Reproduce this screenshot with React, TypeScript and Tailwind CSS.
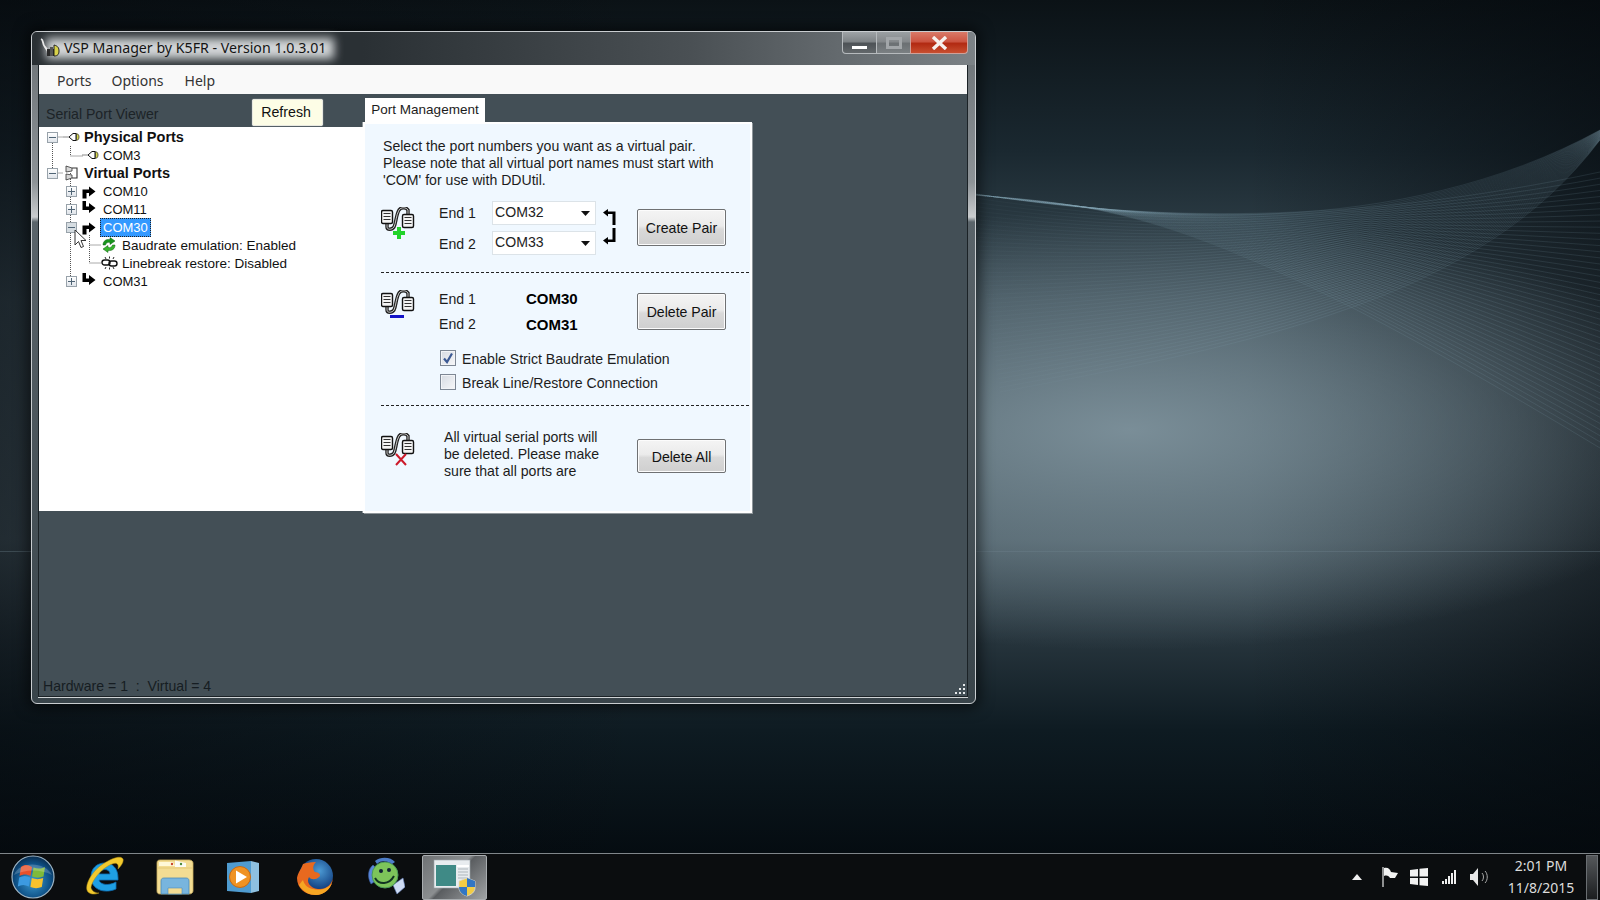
import React from 'react';

type P = [number, number];

const mix = (a: P[], b: P[], t: number) => {
  const p = a.map((q, i) => [q[0] + (b[i][0] - q[0]) * t, q[1] + (b[i][1] - q[1]) * t]);
  return `M${p[0][0]} ${p[0][1]}C${p[1][0]} ${p[1][1]} ${p[2][0]} ${p[2][1]} ${p[3][0]} ${p[3][1]}`;
};

const meshA: [P[], P[]] = [
  [[970, 193], [1150, 222], [1400, 240], [1600, 130]],
  [[1000, 392], [1250, 345], [1480, 300], [1600, 140]],
];
const meshB: [P[], P[]] = [
  [[970, 193], [1150, 222], [1350, 225], [1600, 172]],
  [[970, 195], [1130, 205], [1230, 225], [1600, 448]],
];
const steps = Array.from({ length: 46 }, (_, i) => i / 45);

const Wallpaper = () => (
  <svg className="absolute inset-0" width="1600" height="853" viewBox="0 0 1600 853">
    <defs>
      <linearGradient id="meshFade" gradientUnits="userSpaceOnUse" x1="975" y1="0" x2="1280" y2="0">
        <stop offset="0" stopColor="#86a8b8" stopOpacity="0.05" />
        <stop offset="1" stopColor="#86a8b8" stopOpacity="0.24" />
      </linearGradient>
    </defs>
    <g fill="none" stroke="url(#meshFade)" strokeWidth="0.6">
      {steps.map((t) => (
        <path key={`a${t}`} d={mix(meshA[0], meshA[1], t)} />
      ))}
      {steps.map((t) => (
        <path key={`b${t}`} d={mix(meshB[0], meshB[1], t)} />
      ))}
    </g>
    <line x1="0" y1="551.5" x2="1600" y2="551.5" stroke="#71858f" strokeOpacity="0.35" />
  </svg>
);

const TitleIcon = () => (
  <svg width="22" height="22" viewBox="0 0 22 22" className="shrink-0">
    <path d="M2 2C5 3 3 7 6 10C8 12 9 14 9 17" fill="none" stroke="#e8e8e8" strokeWidth="1.8" />
    <path d="M8 12H15V19H8Z" fill="#2a2a2a" />
    <path d="M15 8C19 9 20 11 20 14C20 17 19 19 15 19Z" fill="#d8d24a" stroke="#222" />
    <path d="M11 10H14V19H11Z" fill="#555" />
  </svg>
);

const PlugIcon = ({ dash }: { dash?: boolean }) => (
  <svg width="17" height="12" viewBox="0 0 17 12" className="shrink-0 overflow-visible">
    {dash && <path d="M0 6H6" stroke="#8a8a8a" strokeWidth="1" />}
    <path d="M6 6L10 2.5H13V9.5H10Z" fill="#fff" stroke="#111" strokeWidth="1" />
    <path d="M13.5 2.5C15.5 3 16 4.5 16 6C16 7.5 15.5 9 13.5 9.5Z" fill="#d6d64a" stroke="#222" strokeWidth="0.7" />
  </svg>
);

const VirtualIcon = () => (
  <svg width="17" height="16" viewBox="0 0 17 16" className="shrink-0 overflow-visible">
    <path d="M3 1L9 3V6L3 7Z" fill="#d8d8d8" stroke="#333" strokeWidth="0.8" />
    <path d="M3 9L9 10V13L3 15Z" fill="#d8d8d8" stroke="#333" strokeWidth="0.8" />
    <path d="M9 3H14V13H9" fill="none" stroke="#333" strokeWidth="1.1" />
  </svg>
);

const ArrowOut = () => (
  <svg width="14" height="18" viewBox="0 0 14 18" className="shrink-0">
    <path d="M0.5 16.5V7.5H7V4.5L13.5 9.5L7 14.5V11H4.5V16.5Z" fill="#000" />
  </svg>
);

const ArrowIn = () => (
  <svg width="14" height="18" viewBox="0 0 14 18" className="shrink-0">
    <path d="M0.5 1H4V6.5H7V3L13.5 8L7 13V10H0.5Z" fill="#000" />
  </svg>
);

const RefreshGreen = () => (
  <svg width="16" height="16" viewBox="0 0 16 16" className="shrink-0">
    <path d="M2 8C2 4 5 2 9 2.5L9 0.5L14 4L9 7.5L9 5.5C6.5 5 5 6 4.5 8Z" fill="#17951c" stroke="#0b5c10" strokeWidth="0.5" />
    <path d="M14 8C14 12 11 14 7 13.5L7 15.5L2 12L7 8.5L7 10.5C9.5 11 11 10 11.5 8Z" fill="#37b52c" stroke="#0b5c10" strokeWidth="0.5" />
  </svg>
);

const BrokenLink = () => (
  <svg width="17" height="14" viewBox="0 0 17 14" className="shrink-0 overflow-visible">
    <g fill="none" stroke="#111" strokeWidth="1.4">
      <rect x="1" y="4" width="8" height="5" rx="2.5" />
      <rect x="8" y="5" width="8" height="5" rx="2.5" />
      <path d="M4 1L5 3M8.5 0.5V2.5M13 1L12 3M4 13L5 11M8.5 13.5V11.5M13 13L12 11" strokeWidth="0.9" />
    </g>
  </svg>
);

const Expander = ({ open, faded }: { open: boolean; faded?: boolean }) => (
  <span
    className={`relative block w-[11px] h-[11px] border border-[#98a2aa] ${faded ? 'bg-[#d6dde2]' : 'bg-[linear-gradient(180deg,#ffffff,#dfe4ea)]'}`}
  >
    <span className="absolute left-[1px] right-[1px] top-[4px] h-px bg-[#4f6475]" />
    {!open && <span className="absolute top-[1px] bottom-[1px] left-[4px] w-px bg-[#4f6475]" />}
  </span>
);

const indent = ['pl-[8px]', 'pl-[27px]', 'pl-[46px]'];
const labelSize = ['text-[14.5px]', 'text-[13px]', 'text-[13.5px]'];

const TreeRow = ({
  level,
  expander,
  icon,
  label,
  bold,
  selected,
  faded,
}: {
  level: number;
  expander?: 'open' | 'closed';
  icon: React.ReactNode;
  label: string;
  bold?: boolean;
  selected?: boolean;
  faded?: boolean;
}) => (
  <div className={`flex items-center h-[18px] ${indent[level]}`}>
    <span className="w-[16px] shrink-0">
      {expander && <Expander open={expander === 'open'} faded={faded} />}
    </span>
    <span className="w-[15px] flex items-center shrink-0">{icon}</span>
    <span
      className={`ml-[3px] px-[2px] leading-[17px] border border-dotted ${labelSize[level]} ${
        selected ? 'bg-[#3399ff] text-white border-[#222]' : 'border-transparent text-[#111]'
      } ${bold ? 'font-bold text-[#000]' : ''}`}
    >
      {label}
    </span>
  </div>
);

const PairIcon = ({ children }: { children: React.ReactNode }) => (
  <svg width="34" height="34" viewBox="0 0 34 34" className="shrink-0">
    <path d="M6 16V20C6 23 11 23 13 20C15 16 15 8 18 3C20 0 25 0 27 3V7" fill="none" stroke="#222" strokeWidth="3.4" />
    <path d="M6 16V20C6 23 11 23 13 20C15 16 15 8 18 3C20 0 25 0 27 3V7" fill="none" stroke="#c4c4c4" strokeWidth="1" />
    <rect x="0.5" y="3.5" width="11" height="13" rx="1.5" fill="#f4f4f4" stroke="#111" strokeWidth="1.4" />
    <path d="M2.5 6.5H9.5M2.5 9.5H9.5M2.5 12.5H9.5" stroke="#333" strokeWidth="1" />
    <rect x="21.5" y="7.5" width="11" height="13" rx="1.5" fill="#f4f4f4" stroke="#111" strokeWidth="1.4" />
    <path d="M23.5 10.5H30.5M23.5 13.5H30.5M23.5 16.5H30.5" stroke="#333" strokeWidth="1" />
    {children}
  </svg>
);

const Caret = () => (
  <svg width="9" height="5" viewBox="0 0 9 5" className="ml-auto mr-[5px] shrink-0">
    <path d="M0 0H9L4.5 5Z" fill="#111" />
  </svg>
);

const Combo = ({ value }: { value: string }) => (
  <div className="flex items-center w-[104px] h-[24px] pl-[2px] bg-white border border-[#dce3e8] text-[#222]">
    <span className="-mt-[1px]">{value}</span>
    <Caret />
  </div>
);

const WinButton = ({ children, className }: { children: string; className: string }) => (
  <button
    className={`w-[89px] shrink-0 pt-[2px] rounded-[2px] border border-[#6f7173] bg-[linear-gradient(180deg,#f4f4f4_0%,#ebebeb_45%,#d9d9d9_55%,#cfcfcf_100%)] shadow-[inset_0_0_0_1px_#fcfcfc] text-[#111] text-center ${className}`}
  >
    {children}
  </button>
);

const Check = ({ checked, label }: { checked?: boolean; label: string }) => (
  <div className="flex items-center h-[16px]">
    <span className="flex items-center justify-center w-[16px] h-[16px] border border-[#7d8794] bg-[linear-gradient(135deg,#d6dbe2,#f6f7f9)] shadow-[inset_0_0_0_1px_#f2f4f7] shrink-0">
      {checked && (
        <svg width="12" height="12" viewBox="0 0 12 12">
          <path d="M2 6.5L5 10L10 1.5" fill="none" stroke="#3c5a94" strokeWidth="2.2" />
        </svg>
      )}
    </span>
    <span className="ml-[6px] pt-[2px] text-[#1d1d1d]">{label}</span>
  </div>
);

const Cursor = () => (
  <svg width="14" height="20" viewBox="0 0 14 20" className="absolute left-[35px] top-[102px]">
    <path d="M1 1V16L4.5 12.5L7 18.5L9.5 17.5L7 11.5H12Z" fill="#fff" stroke="#333" strokeWidth="1" />
  </svg>
);

const TreeLines = () => (
  <svg className="absolute inset-0" width="324" height="384">
    <path
      d="M13.5 16V46M13.5 46H24M13.5 10H24M31.5 19V29H44M31.5 46V154M31.5 64H28M31.5 82H28M31.5 154H28M50.5 108V136H62M50.5 118H62"
      fill="none"
      stroke="#555"
      strokeWidth="1"
      strokeDasharray="1 1"
    />
  </svg>
);

const StartOrb = () => (
  <svg width="44" height="44" viewBox="0 0 44 44">
    <defs>
      <radialGradient id="orb" cx="50%" cy="60%" r="60%">
        <stop offset="0" stopColor="#3d9bd0" />
        <stop offset="0.7" stopColor="#0d4f85" />
        <stop offset="1" stopColor="#0a2c4d" />
      </radialGradient>
    </defs>
    <circle cx="22" cy="22" r="21" fill="url(#orb)" stroke="#9fb6c6" strokeWidth="1.2" />
    <path d="M10 12C14 9 17 10 21 12L19.5 21C15.5 19 12.5 19 8.5 21Z" fill="#e8502a" />
    <path d="M22.5 12.5C26.5 14 30 14 34 12L32.5 21.5C28.5 23 25 23 21 21.5Z" fill="#7fba3a" />
    <path d="M8.2 22.5C12 20.5 15.5 20.5 19.2 22.5L17.8 31.5C14 29.5 10.5 29.5 6.8 31.5Z" fill="#3c9ae0" />
    <path d="M20.8 23C24.5 24.5 28.5 24.5 32.2 23L30.8 32C27 33.5 23 33.5 19.4 32Z" fill="#f7c22e" />
    <path d="M3 20C8 6 34 6 41 20C30 14 14 14 3 20Z" fill="#fff" opacity="0.2" />
  </svg>
);

const IeIcon = () => (
  <svg width="40" height="42" viewBox="0 0 40 42">
    <path
      d="M6 21C6 12 12 7 20 7C28 7 33 13 33 22V24H14C15 29 24 30 31 26V33C20 38 6 34 6 21ZM14 18H25C25 12 15 12 14 18Z"
      fill="#1f9fe4"
      stroke="#0d6fb5"
      strokeWidth="0.8"
    />
    <path d="M3 36C-2 30 8 14 18 8C27 2 36 -1 38 3C39 6 36 10 33 13C34 8 32 6 27 8C16 12 6 26 6 32C7 35 10 37 14 37C9 39 5 38 3 36Z" fill="#f2c92e" stroke="#b38f12" strokeWidth="0.5" />
  </svg>
);

const FolderIcon = () => (
  <svg width="40" height="40" viewBox="0 0 40 40">
    <path d="M2 6C2 4 3 3 5 3H34C36 3 38 4 38 6V34C38 36 36 37 34 37H5C3 37 2 36 2 34Z" fill="#f3dc93" stroke="#c9ad5e" strokeWidth="0.8" />
    <path d="M4 5H18L20 9H4Z" fill="#fff8d8" />
    <path d="M20 3.5L31 6V10H20Z" fill="#fbfbf3" />
    <circle cx="17" cy="7" r="1.2" fill="#c8452c" />
    <circle cx="26" cy="7" r="1.2" fill="#4b8a3c" />
    <path d="M2 11H38" stroke="#e3c877" />
    <path d="M6 37V24C6 22 7 21 9 21H31C33 21 34 22 34 24V37Z" fill="#78b5de" stroke="#4d8ab8" strokeWidth="0.8" />
    <path d="M13 37V31H27V37Z" fill="#f3dc93" stroke="#4d8ab8" strokeWidth="0.6" />
  </svg>
);

const PlayerIcon = () => (
  <svg width="34" height="34" viewBox="0 0 34 34">
    <path d="M1 3L25 1V33L1 31Z" fill="#4f9bd0" />
    <path d="M25 1L33 3V31L25 33Z" fill="#8ec0e0" />
    <circle cx="14" cy="17" r="10.5" fill="#ef9223" stroke="#c96a12" />
    <path d="M10 10.5L21 17L10 23.5Z" fill="#fff" />
  </svg>
);

const FoxIcon = () => (
  <svg width="38" height="38" viewBox="0 0 38 38">
    <defs>
      <radialGradient id="globe" cx="60%" cy="35%" r="55%">
        <stop offset="0" stopColor="#4c9ad4" />
        <stop offset="1" stopColor="#123f80" />
      </radialGradient>
    </defs>
    <circle cx="20" cy="18" r="17" fill="url(#globe)" />
    <path d="M7 6C5 12 2 14 1 20C1 30 9 37 19 37C29 37 36 30 37 20C36 26 30 32 22 31C14 30 10 24 13 19C15 22 20 22 23 19C26 17 22 14 19 14C17 12 16 8 20 4C14 4 10 5 7 6Z" fill="#e8691f" />
    <path d="M3 27C7 34 14 37 20 37C28 37 34 31 36 25C32 31 24 33 17 31C11 30 8 26 7 22C5 24 4 26 3 27Z" fill="#f6a623" />
  </svg>
);

const BuddyIcon = () => (
  <svg width="40" height="40" viewBox="0 0 40 40">
    <path d="M8 8C3 12 2 20 6 27L12 23L11 11Z" fill="#5a87d8" stroke="#3b5fa8" strokeWidth="0.6" />
    <path d="M28 28L38 21L40 30L32 37Z" fill="#cfdcf4" stroke="#6a84c0" strokeWidth="0.6" />
    <circle cx="20" cy="18" r="13" fill="#7dc45a" stroke="#4a9a5a" />
    <circle cx="16" cy="14" r="2" fill="#123" />
    <circle cx="24" cy="13" r="2" fill="#123" />
    <path d="M10 21C14 28 24 28 29 19" fill="none" stroke="#132" strokeWidth="2" />
    <path d="M10 4C16 -1 26 0 30 5L27 7C23 4 16 3 12 7Z" fill="#4d7dc8" />
  </svg>
);

const AppTile = () => (
  <svg width="44" height="40" viewBox="0 0 44 40">
    <rect x="1" y="3" width="36" height="28" fill="#e8ecef" stroke="#9ba3a8" strokeWidth="0.6" />
    <rect x="3" y="8" width="20" height="21" fill="#3f8a86" />
    <rect x="24" y="8" width="12" height="2" fill="#fff" />
    <path d="M25 12H35M25 15H35M25 18H35M25 21H35" stroke="#aeb6bb" strokeWidth="1" />
    <path d="M26 24L34 21L42 24V31C42 35 38 38 34 39C30 38 26 35 26 31Z" fill="#f2cc44" stroke="#d5d9dc" strokeWidth="0.8" />
    <path d="M34 21L42 24V30H34ZM34 30V39C30 38 26 35 26 30Z" fill="#3276c3" />
  </svg>
);

const App = () => {
  return (
    <div className="flex flex-col w-[1600px] h-[900px] overflow-hidden bg-black font-['Liberation_Sans',sans-serif] text-[14.1px]">
      <div className="relative flex-1 bg-[radial-gradient(ellipse_600px_220px_at_1130px_430px,rgba(125,145,155,0.95)_0%,rgba(125,145,155,0)_100%),linear-gradient(90deg,rgba(4,8,12,0.55)_0%,rgba(4,8,12,0)_40%,rgba(4,8,12,0)_78%,rgba(4,8,12,0.6)_100%),linear-gradient(180deg,#0b1216_0px,#1a2830_150px,#3a4b54_300px,#465760_540px,#26343c_640px,#0e1b22_730px,#050c11_853px)]">
        <Wallpaper />

        {/* Window */}
        <div className="absolute left-[31px] top-[31px] w-[945px] h-[673px] flex flex-col rounded-[6px] border border-[#c9cdd0] bg-[linear-gradient(180deg,#6a7074_0px,#8d9397_150px,#c9ccce_185px,#5a646a_190px,#39444a_100%)] shadow-[0_0_14px_4px_rgba(0,0,0,0.55)]">
          {/* Title bar */}
          <div className="relative flex items-center h-[33px] -mb-px rounded-t-[5px] pl-[7px] bg-[linear-gradient(90deg,#2a3034_0%,#2a3034_35%,#4a5054_70%,#7c8286_100%)]">
            <div className="absolute left-[14px] top-[6px] w-[288px] h-[21px] bg-[#d2d5d7] blur-[5px]" />
            <div className="relative flex items-center -mt-[1px]">
              <TitleIcon />
              <span className="ml-[3px] text-[#141414] text-[14.2px] font-['Noto_Sans',sans-serif]">
                VSP Manager by K5FR - Version 1.0.3.01
              </span>
            </div>
            <div className="absolute right-[7px] top-0 flex h-[22px]">
              <div className="flex items-end justify-center w-[35px] rounded-bl-[4px] border border-t-0 border-[#b6babd] bg-[linear-gradient(180deg,#9ea3a6_0%,#7f8487_45%,#4d5256_55%,#63686b_100%)] pb-[4px]">
                <span className="block w-[15px] h-[3px] bg-white" />
              </div>
              <div className="flex items-center justify-center w-[33px] border-b border-[#b6babd] bg-[linear-gradient(180deg,#9a9fa2_0%,#85898c_45%,#6b7073_55%,#7b8083_100%)]">
                <span className="block w-[16px] h-[12px] border-[3px] border-[#a2a6a9]" />
              </div>
              <div className="flex items-center justify-center w-[58px] rounded-br-[4px] border border-t-0 border-[#d0a098] bg-[linear-gradient(180deg,#d97a68_0%,#cc5542_45%,#b22a12_55%,#c84f30_100%)]">
                <svg width="17" height="14" viewBox="0 0 17 14">
                  <path d="M2 1L15 13M15 1L2 13" fill="none" stroke="#f6f1ee" strokeWidth="3.4" />
                </svg>
              </div>
            </div>
          </div>

          {/* Client area */}
          <div className="flex flex-col flex-1 ml-[6px] mr-[7px] mb-[6px] border border-[#1b2226] shadow-[0_1px_0_#cfd3d5]">
            <div className="flex items-center h-[29px] pt-[1px] bg-[#f9f9f9] font-['Noto_Sans',sans-serif] text-[14px] text-[#333]">
              <span className="ml-[18px]">Ports</span>
              <span className="ml-[20px]">Options</span>
              <span className="ml-[21px]">Help</span>
            </div>

            <div className="relative flex flex-col flex-1 bg-[#434f56]">
              <div className="flex">
                {/* Serial port viewer */}
                <div className="w-[324px] shrink-0">
                  <div className="flex h-[33px]">
                    <span className="ml-[7px] mt-[12px] text-[#1c2327] leading-[17px]">Serial Port Viewer</span>
                    <button className="ml-[93px] mt-[5px] w-[71px] h-[27px] pr-[2px] rounded-[2px] bg-[#fdfde6] border border-[#e8e8e0] text-[14.2px] text-[#111] text-center shadow-[0_0_1px_#fff]">
                      Refresh
                    </button>
                  </div>
                  <div className="relative h-[384px] pt-[1px] bg-white">
                    <TreeLines />
                    <div className="relative">
                      <TreeRow level={0} expander="open" icon={<PlugIcon dash />} label="Physical Ports" bold />
                      <TreeRow level={1} icon={<PlugIcon dash />} label="COM3" />
                      <TreeRow level={0} expander="open" icon={<VirtualIcon />} label="Virtual Ports" bold />
                      <TreeRow level={1} expander="closed" icon={<ArrowOut />} label="COM10" />
                      <TreeRow level={1} expander="closed" icon={<ArrowIn />} label="COM11" />
                      <TreeRow level={1} expander="open" faded icon={<ArrowOut />} label="COM30" selected />
                      <TreeRow level={2} icon={<RefreshGreen />} label="Baudrate emulation: Enabled" />
                      <TreeRow level={2} icon={<BrokenLink />} label="Linebreak restore: Disabled" />
                      <TreeRow level={1} expander="closed" icon={<ArrowIn />} label="COM31" />
                    </div>
                    <Cursor />
                  </div>
                </div>

                {/* Port management tab */}
                <div className="w-[389px] shrink-0 pt-[4px] text-[#1c1c1c]">
                  <div className="flex items-center justify-center ml-[2px] w-[120px] h-[24px] bg-white text-[13.5px]">
                    Port Management
                  </div>
                  <div className="h-[391px] pl-[16px] border-2 border-white bg-[#f0f8ff] shadow-[1px_1px_0_#8f969a,-1px_0_0_#8f969a]">
                    <p className="pl-[2px] pt-[14px] leading-[17px]">
                      Select the port numbers you want as a virtual pair.
                      <br />
                      Please note that all virtual port names must start with
                      <br />
                      'COM' for use with DDUtil.
                    </p>

                    <div className="flex mt-[12px]">
                      <div className="w-[58px] pt-[6px] shrink-0">
                        <PairIcon>
                          <path d="M18 20V32M12 26H24" stroke="#22d32a" strokeWidth="4" />
                        </PairIcon>
                      </div>
                      <div className="flex flex-col gap-[6px] w-[157px] shrink-0">
                        <div className="flex items-center">
                          <span className="w-[53px] pt-[2px]">End 1</span>
                          <Combo value="COM32" />
                        </div>
                        <div className="flex items-center">
                          <span className="w-[53px] pt-[3px]">End 2</span>
                          <Combo value="COM33" />
                        </div>
                      </div>
                      <div className="flex flex-col gap-[3px] ml-[7px] mt-[8px] w-[14px] shrink-0">
                        <svg width="13" height="16" viewBox="0 0 13 16">
                          <path d="M0 3.5L5 0V2.5H12.5V16H9.5V5H5V7.5Z" fill="#000" />
                        </svg>
                        <svg width="13" height="17" viewBox="0 0 13 17">
                          <path d="M0 12.5L5 9V11.5H9.5V0H12.5V14H5V16.5Z" fill="#000" />
                        </svg>
                      </div>
                      <WinButton className="ml-[20px] mt-[8px] h-[37px]">Create Pair</WinButton>
                    </div>

                    <div className="w-[368px] mt-[17px] border-t border-dashed border-[#222]" />

                    <div className="flex mt-[17px]">
                      <div className="w-[58px] shrink-0">
                        <PairIcon>
                          <rect x="9" y="25" width="14" height="3" fill="#1414c8" />
                        </PairIcon>
                      </div>
                      <div className="flex flex-col gap-[8px] w-[198px] shrink-0 pt-[1px] leading-[17px]">
                        <div className="flex">
                          <span className="w-[87px]">End 1</span>
                          <span className="-mt-[1px] font-bold text-[#000] text-[15px]">COM30</span>
                        </div>
                        <div className="flex">
                          <span className="w-[87px]">End 2</span>
                          <span className="font-bold text-[#000] text-[15px]">COM31</span>
                        </div>
                      </div>
                      <WinButton className="mt-[3px] h-[37px]">Delete Pair</WinButton>
                    </div>

                    <div className="flex flex-col gap-[8px] mt-[17px] ml-[59px]">
                      <Check checked label="Enable Strict Baudrate Emulation" />
                      <Check label="Break Line/Restore Connection" />
                    </div>

                    <div className="w-[368px] mt-[15px] border-t border-dashed border-[#222]" />

                    <div className="flex mt-[23px]">
                      <div className="w-[63px] pt-[4px] shrink-0">
                        <PairIcon>
                          <path d="M15 21L25 32M25 21L15 32" stroke="#cc1a2a" strokeWidth="2" />
                        </PairIcon>
                      </div>
                      <p className="w-[193px] shrink-0 leading-[17px]">
                        All virtual serial ports will
                        <br />
                        be deleted. Please make
                        <br />
                        sure that all ports are
                      </p>
                      <WinButton className="mt-[10px] h-[34px]">Delete All</WinButton>
                    </div>
                  </div>
                </div>
              </div>

              <div className="mt-auto pl-[4px] pb-[1px] leading-[17px] text-[#161d22]">Hardware = 1&nbsp; :&nbsp; Virtual = 4</div>

              <svg width="12" height="12" viewBox="0 0 12 12" className="absolute right-[1px] bottom-0">
                <path d="M9 0H11V2H9ZM5 4H7V6H5ZM9 4H11V6H9ZM1 8H3V10H1ZM5 8H7V10H5ZM9 8H11V10H9Z" fill="#e4e8ea" />
              </svg>
            </div>
          </div>
        </div>
      </div>

      {/* Taskbar */}
      <div className="flex items-center h-[47px] border-t border-[#80868a] bg-[#0b0d0f] font-['Noto_Sans',sans-serif]">
        <div className="flex items-center justify-center w-[70px] pr-[4px]">
          <StartOrb />
        </div>
        <div className="flex items-center justify-center w-[70px]">
          <IeIcon />
        </div>
        <div className="flex items-center justify-center w-[70px]">
          <FolderIcon />
        </div>
        <div className="flex items-center justify-center w-[70px] pr-[5px]">
          <PlayerIcon />
        </div>
        <div className="flex items-center justify-center w-[70px]">
          <FoxIcon />
        </div>
        <div className="flex items-center justify-center w-[70px]">
          <BuddyIcon />
        </div>
        <div className="flex items-center justify-center ml-[2px] w-[65px] h-[45px] rounded-[2px] border border-[#a9adb0] bg-[linear-gradient(135deg,#6f7275_0%,#8b8e90_45%,#5a5d60_50%,#a0a3a5_100%)]">
          <AppTile />
        </div>

        <div className="flex items-center ml-auto mr-[2px]">
          <svg width="10" height="6" viewBox="0 0 10 6">
            <path d="M5 0L10 6H0Z" fill="#f0f0f0" />
          </svg>
          <svg width="16" height="20" viewBox="0 0 16 20" className="ml-[20px]">
            <path d="M1 0V20" stroke="#e8e8e8" strokeWidth="1.2" />
            <path d="M2 1C6 0 8 2 9 5L16 6L13 11L8 11C7 9 5 8 2 9Z" fill="#f2f2f2" />
          </svg>
          <svg width="18" height="18" viewBox="0 0 18 18" className="ml-[12px]">
            <path d="M0 2L8 1V8.5H0ZM9.5 0.8L18 0V8.5H9.5ZM0 10H8V17L0 16ZM9.5 10H18V18L9.5 17.2Z" fill="#f2f2f2" />
          </svg>
          <svg width="14" height="14" viewBox="0 0 14 14" className="ml-[14px]">
            <path d="M0 11H2V14H0ZM3 9H5V14H3ZM6 6H8V14H6ZM9 3H11V14H9ZM12 0H14V14H12Z" fill="#eee" />
          </svg>
          <svg width="18" height="18" viewBox="0 0 18 18" className="ml-[14px]">
            <path d="M0 6H3L8 0V18L3 12H0Z" fill="#e8e8e8" />
            <path d="M12 5C14 7 14 11 12 13M15 3C18 6 18 12 15 15" fill="none" stroke="#aaa" strokeWidth="1" />
          </svg>
          <div className="ml-[13px] w-[80px] text-center text-[14px] leading-[22px] text-[#dcdcdc]">
            <div>2:01 PM</div>
            <div>11/8/2015</div>
          </div>
          <div className="ml-[5px] w-[12px] h-[45px] border border-[#6a6e72] bg-[linear-gradient(180deg,#55585b,#1b1d1f)]" />
        </div>
      </div>
    </div>
  );
};

export default App;
